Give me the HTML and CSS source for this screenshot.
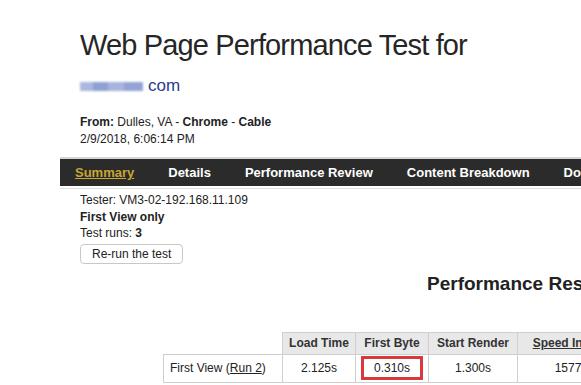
FILE: index.html
```html
<!DOCTYPE html>
<html>
<head>
<meta charset="utf-8">
<link rel="stylesheet" href="styles.css">
</head>
<body>
<div class="page">
  <div class="header">
    <h1 class="title">Web Page Performance Test for</h1>
    <div class="site"><span class="blur"></span><span class="com">com</span></div>
    <div class="meta">
      <div><b>From:</b> Dulles, VA - <b>Chrome</b> - <b>Cable</b></div>
      <div>2/9/2018, 6:06:14 PM</div>
    </div>
  </div>
  <nav class="nav">
    <a class="nav-item active">Summary</a>
    <a class="nav-item">Details</a>
    <a class="nav-item">Performance Review</a>
    <a class="nav-item">Content Breakdown</a>
    <a class="nav-item">Domains</a>
  </nav>
  <div class="info">
    <div>Tester: VM3-02-192.168.11.109</div>
    <div><b>First View only</b></div>
    <div>Test runs: <b>3</b></div>
    <button class="btn">Re-run the test</button>
  </div>
  <h2 class="results">Performance Results (Median Run)</h2>
  <table class="tbl">
    <tr>
      <th class="blank"></th>
      <th class="c1">Load Time</th>
      <th class="c2">First Byte</th>
      <th class="c3">Start Render</th>
      <th class="c4"><u>Speed Index</u></th>
    </tr>
    <tr>
      <td class="label">First View (<u>Run 2</u>)</td>
      <td>2.125s</td>
      <td><span class="mark">0.310s</span></td>
      <td>1.300s</td>
      <td>1577</td>
    </tr>
  </table>
</div>
</body>
</html>
```
FILE: styles.css
```css
html, body {
  margin: 0;
  padding: 0;
  background: #fff;
  overflow: hidden;
}
body {
  font-family: "Liberation Sans", Arial, sans-serif;
  color: #222;
  width: 581px;
  height: 385px;
}
.page {
  padding-left: 60px;
  width: 900px;
}
.header {
  padding-left: 20px;
  padding-top: 27px;
}
.title {
  margin: 0;
  font-size: 29px;
  font-weight: normal;
  letter-spacing: -0.85px;
  line-height: 36px;
  color: #262626;
}
.site {
  margin-top: 13px;
  height: 20px;
  display: flex;
  align-items: center;
}
.blur {
  display: inline-block;
  width: 63px;
  height: 9px;
  background: linear-gradient(90deg, #aab8de 0 20%, #8fa1d2 20% 45%, #a7b4dc 45% 70%, #93a4d4 70% 100%);
  filter: blur(0.8px);
  margin-right: 5px;
}
.com {
  font-size: 17px;
  color: #2a3b92;
}
.meta {
  margin-top: 18px;
  font-size: 12px;
  line-height: 16.5px;
  color: #222;
}
.nav {
  margin-top: 10px;
  height: 27px;
  background: #2b2b2b;
  border-top: 2px solid #d6d6d6;
  display: flex;
  align-items: center;
  padding-left: 15px;
  gap: 34px;
}
.nav-item {
  color: #fff;
  font-size: 13px;
  font-weight: bold;
  white-space: nowrap;
}
.nav-item.active {
  color: #c9a533;
  text-decoration: underline;
}
.info {
  border-top: 1px solid #ddd;
  margin-top: 2px;
  padding-left: 20px;
  padding-top: 3px;
  font-size: 12px;
  line-height: 16.5px;
  color: #222;
}
.btn {
  margin-top: 2px;
  font-family: "Liberation Sans", Arial, sans-serif;
  font-size: 12px;
  color: #222;
  background: #fff;
  border: 1px solid #c8c8c8;
  border-radius: 4px;
  padding: 2px 11px;
  height: 20px;
  line-height: 14px;
}
.results {
  margin: 9px 0 0 367px;
  font-size: 19px;
  font-weight: bold;
  color: #222;
  white-space: nowrap;
}
.tbl {
  margin-top: 37px;
  margin-left: 103px;
  border-collapse: collapse;
  font-size: 12px;
  color: #222;
}
.tbl th {
  background: #e8e8e8;
  border: 1px solid #cfcfcf;
  height: 21px;
  padding: 0 5px;
  font-weight: bold;
  color: #333;
  white-space: nowrap;
}
.tbl th.blank {
  background: transparent;
  border: none;
}
.tbl td {
  border: 1px solid #cfcfcf;
  height: 27px;
  padding: 0 5px;
  text-align: center;
  white-space: nowrap;
}
.tbl td.label {
  text-align: left;
  padding: 0 6px;
  width: 106px;
}
.c1 { width: 62px; }
.c2 { width: 61px; }
.c3 { width: 78px; }
.c4 { width: 90px; }
.mark {
  display: inline-block;
  border: 3px solid #d9393b;
  padding: 2px 10px;
  line-height: 14px;
}
```
